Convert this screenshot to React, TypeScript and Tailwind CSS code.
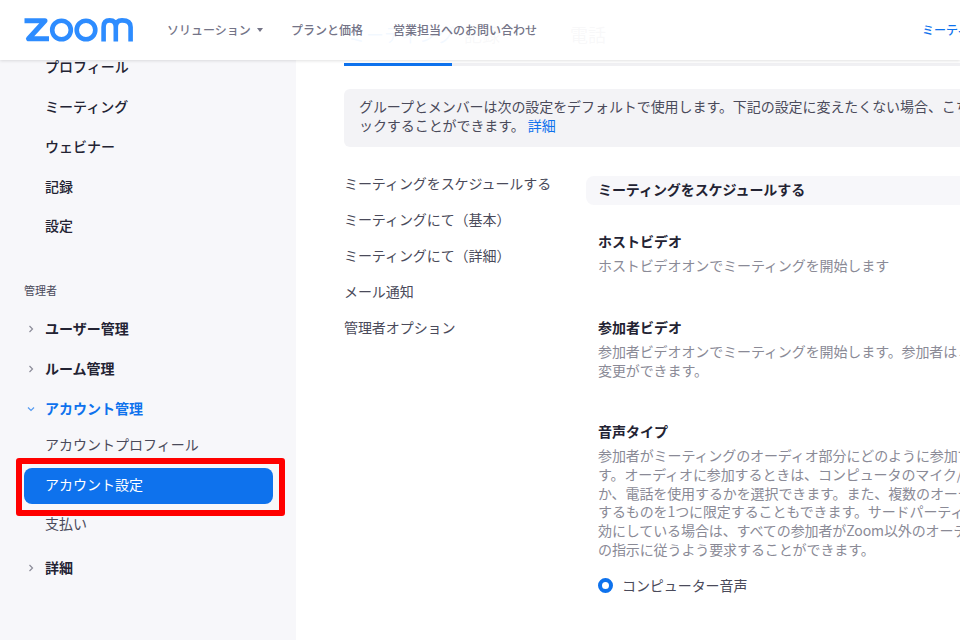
import React from "react";

const font = { fontFamily: '"Noto Sans CJK JP", "Noto Sans", sans-serif' };

function Chevron({ down = false }: { down?: boolean }) {
  return (
    <svg width="8" height="8" viewBox="0 0 8 8" fill="none" className="shrink-0">
      {down ? (
        <path d="M1 2.5 L4 5.5 L7 2.5" stroke="#0e72ed" strokeOpacity="0.7" strokeWidth="1.2" />
      ) : (
        <path d="M2.5 1 L5.5 4 L2.5 7" stroke="#8c8c99" strokeWidth="1.2" />
      )}
    </svg>
  );
}

function Logo() {
  return (
    <svg width="110" height="24" viewBox="0 0 110 24" fill="none">
      <path d="M0.5 2.7 H21 L4.5 20.8 H25" stroke="#2d8cff" strokeWidth="5" strokeLinejoin="round" />
      <circle cx="37.5" cy="12" r="9.3" stroke="#2d8cff" strokeWidth="4.6" />
      <circle cx="62" cy="12" r="9.3" stroke="#2d8cff" strokeWidth="4.6" />
      <path d="M79.6 23.5 V9 Q79.6 2.4 85.6 2.4 Q91.8 2.4 91.8 9 V23.5 M91.8 9 Q91.8 2.4 98 2.4 Q106.6 2.4 106.6 9 V23.5" stroke="#2d8cff" strokeWidth="4.6" />
    </svg>
  );
}

function SideLink({ label }: { label: string }) {
  return <div className="h-[39.75px] flex items-center pl-[45px] text-[14px] font-medium text-[#232333]">{label}</div>;
}

function SideGroup({ label, open = false }: { label: string; open?: boolean }) {
  return (
    <div className={`h-10 flex items-center pl-[27px] gap-[10px] text-[14px] font-bold ${open ? "text-[#0e72ed]" : "text-[#232333]"}`}>
      <Chevron down={open} />
      <span>{label}</span>
    </div>
  );
}

function Sidebar() {
  return (
    <aside className="w-[296px] shrink-0 bg-[#f7f7fa] pt-[47px]">
      <SideLink label="プロフィール" />
      <SideLink label="ミーティング" />
      <SideLink label="ウェビナー" />
      <SideLink label="記録" />
      <SideLink label="設定" />
      <div className="pl-6 pt-[35px] pb-[10px] h-[63px] text-[11px] leading-[18px] text-[#4a4a5a]">管理者</div>
      <SideGroup label="ユーザー管理" />
      <SideGroup label="ルーム管理" />
      <SideGroup label="アカウント管理" open />
      <div className="h-[32px] flex items-center pl-[45px] text-[14px] text-[#4a4a5a]">アカウントプロフィール</div>
      <div className="relative mt-[7px] ml-6 w-[249px] h-[36px] rounded-lg bg-[#0e72ed] flex items-center pl-[21px] pb-[2px] text-[14px] text-white">
        アカウント設定
        <div className="absolute -left-[8px] -top-[10px] -right-[12px] -bottom-[12px] border-[6px] border-[#ff0000] rounded-[3px]" />
      </div>
      <div className="mt-[6px] h-[28px] flex items-center pl-[45px] text-[14px] text-[#4a4a5a]">支払い</div>
      <div className="mt-[18px] h-[24px] flex items-center pl-[27px] gap-[10px] text-[14px] font-bold text-[#232333]">
        <Chevron />
        <span>詳細</span>
      </div>
    </aside>
  );
}

function Setting({ title, lines, className = "" }: { title: string; lines: string[]; className?: string }) {
  return (
    <div className={className}>
      <div className="text-[14px] leading-[20px] font-bold text-[#232333]">{title}</div>
      <div className="mt-[5px] text-[14px] leading-[18.9px] tracking-[-0.1px] text-[#8a8a96]">
        {lines.map((l) => (
          <div key={l}>{l}</div>
        ))}
      </div>
    </div>
  );
}

function Main() {
  return (
    <main className="flex-1 min-w-0 overflow-hidden whitespace-nowrap pt-[24px] pl-12">
      <div className="w-[700px] h-[42px] border-b-[3px] border-[#f0f0f3] flex text-[18px] leading-[20px] text-[#747487]">
        <div className="w-[108px] h-[42px] border-b-[3px] border-[#0e72ed] pl-1 text-[#0e72ed]">ミーティング</div>
        <div className="w-[118px] pl-[12px]">記録</div>
        <div>電話</div>
      </div>
      <div className="mt-[23px] w-[700px] h-[58px] rounded-md bg-[#f3f3f6] pl-[15px] pt-[8px] text-[14px] leading-[19px] tracking-[-0.07px] text-[#4a4a5a]">
        <div>グループとメンバーは次の設定をデフォルトで使用します。下記の設定に変えたくない場合、こちらをクリ</div>
        <div>ックすることができます。 <span className="text-[#0e72ed]">詳細</span></div>
      </div>
      <div className="flex mt-[29px]">
        <nav className="w-[242px] shrink-0 -mt-[11px] text-[14px] leading-[36px] tracking-[-0.07px] text-[#4a4a5a]">
          <div>ミーティングをスケジュールする</div>
          <div>ミーティングにて（基本）</div>
          <div>ミーティングにて（詳細）</div>
          <div>メール通知</div>
          <div>管理者オプション</div>
        </nav>
        <div className="w-[500px] shrink-0">
          <div className="h-[29px] rounded-l-lg bg-[#f7f7fa] pl-3 pb-[3px] flex items-center text-[14px] font-bold tracking-[-0.07px] text-[#232333]">
            ミーティングをスケジュールする
          </div>
          <div className="pl-3">
            <Setting className="mt-[26px]" title="ホストビデオ" lines={["ホストビデオオンでミーティングを開始します"]} />
            <Setting className="mt-[42px]" title="参加者ビデオ" lines={["参加者ビデオオンでミーティングを開始します。参加者はミーティング中に", "変更ができます。"]} />
            <Setting className="mt-[41px]" title="音声タイプ" lines={[
              "参加者がミーティングのオーディオ部分にどのように参加できるかを選択しま",
              "す。オーディオに参加するときは、コンピュータのマイク/スピーカーを使用する",
              "か、電話を使用するかを選択できます。また、複数のオーディオタイプから使用",
              "するものを1つに限定することもできます。サードパーティオーディオを有",
              "効にしている場合は、すべての参加者がZoom以外のオーディオを使用するため",
              "の指示に従うよう要求することができます。",
            ]} />
            <div className="mt-[16px] flex items-center gap-[9px] text-[14px] leading-[20px] tracking-[-0.07px] text-[#4a4a5a]">
              <span className="w-[15px] h-[15px] rounded-full border-[4px] border-[#0e72ed] bg-white" />
              コンピューター音声
            </div>
          </div>
        </div>
      </div>
    </main>
  );
}

function Header() {
  return (
    <header className="absolute inset-x-0 top-0 h-[60px] bg-white/95 shadow-[0_1px_3px_rgba(0,0,0,0.12)] flex items-center whitespace-nowrap text-[12px] font-medium text-[#747487]">
      <div className="ml-6 w-[143px] shrink-0 flex items-center pb-[1px]">
        <Logo />
      </div>
      <div className="w-[124px] shrink-0 flex items-center gap-[6px]">
        ソリューション
        <span className="w-0 h-0 border-x-[3.5px] border-x-transparent border-t-[4px] border-t-[#747487]" />
      </div>
      <div className="w-[102px] shrink-0">プランと価格</div>
      <div className="w-[529px] shrink-0">営業担当へのお問い合わせ</div>
      <div className="text-[#0e72ed]">ミーティング</div>
    </header>
  );
}

export default function App() {
  return (
    <div className="relative w-[960px] h-[640px] overflow-hidden bg-white flex" style={font}>
      <Sidebar />
      <Main />
      <Header />
    </div>
  );
}
